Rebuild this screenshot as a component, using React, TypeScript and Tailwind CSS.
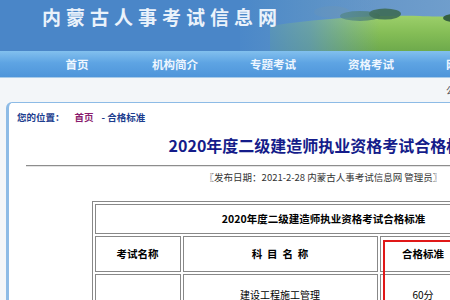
const cjk = '"Noto Sans CJK SC", "Liberation Sans", sans-serif';

const navItems = ['首页', '机构简介', '专题考试', '资格考试', '网上报名'];

function Banner() {
  return (
    <div className="relative h-[51px] w-full overflow-hidden bg-[#4a86c8]">
      <svg className="absolute inset-0" width="644" height="51" viewBox="0 0 644 51">
        <defs>
          <linearGradient id="grassV" x1="0" y1="0" x2="0" y2="1">
            <stop offset="0" stopColor="#9ccf6a" />
            <stop offset="0.5" stopColor="#84bd56" />
            <stop offset="1" stopColor="#6eaa4c" />
          </linearGradient>
          <linearGradient id="fadeL" x1="0" y1="0" x2="1" y2="0">
            <stop offset="0" stopColor="#4b88c9" stopOpacity="1" />
            <stop offset="0.5" stopColor="#5a92c6" stopOpacity="0.7" />
            <stop offset="1" stopColor="#6a9cc6" stopOpacity="0" />
          </linearGradient>
          <linearGradient id="skyR" x1="0" y1="0" x2="1" y2="0">
            <stop offset="0" stopColor="#4a86c8" />
            <stop offset="0.35" stopColor="#6898c9" />
            <stop offset="1" stopColor="#84aed4" />
          </linearGradient>
        </defs>
        <rect x="240" width="404" height="51" fill="url(#skyR)" />
        <ellipse cx="332" cy="12" rx="18" ry="6" fill="#6f94b0" opacity="0.6" />
        <path d="M270 26 C 320 18, 380 15, 420 16 C 440 17, 460 17, 644 16 L 644 51 L 270 51 Z" fill="url(#grassV)" />
        <ellipse cx="360" cy="16" rx="20" ry="5" fill="#4e7e6a" opacity="0.8" />
        <ellipse cx="385" cy="14" rx="16" ry="5.5" fill="#3e6c55" opacity="0.9" />
        <ellipse cx="453" cy="18" rx="10" ry="4" fill="#355f40" />
        <rect x="240" width="140" height="51" fill="url(#fadeL)" />
      </svg>
      <div
        className="relative pl-[42px] pt-[5px] text-[19px] font-bold leading-[24px] tracking-[5px] text-[#eaf2fb]"
        style={{ fontFamily: cjk }}
      >
        内蒙古人事考试信息网
      </div>
    </div>
  );
}

function NavBar() {
  return (
    <div className="flex h-[26px] items-center bg-[linear-gradient(#82c0ee,#5ea4e3_45%,#4e95da)] pl-[28px] shadow-[0_1px_0_#a8cbe9]">
      {navItems.map((item) => (
        <div
          key={item}
          className="w-[98px] text-center text-[11.5px] font-bold leading-[26px] text-[#eef6ff]"
          style={{ fontFamily: cjk }}
        >
          {item}
        </div>
      ))}
    </div>
  );
}

export default function App() {
  const cell = 'border border-[#888] text-center text-black';
  return (
    <div className="h-[300px] w-[450px] overflow-hidden bg-[#f3f6f9]" style={{ fontFamily: cjk }}>
      <div className="w-[644px]">
        <Banner />
        <NavBar />
        <div className="flex h-[25px] items-center pl-[446px] text-[10px] text-[#555]">公告通知</div>

        <div className="ml-[6px] w-[632px] rounded-tl-[6px] border-l-[3px] border-t border-[#8dbbe6] bg-white pt-[6px]">
          <div className="pl-[8px] text-[9.5px] font-bold leading-[16px]">
            <span className="text-[#1c3d8e]">您的位置：</span>
            <span className="ml-[10px] text-[#8a1c6e]">首页</span>
            <span className="ml-[8px] text-[#1c3d8e]">- 合格标准</span>
          </div>

          <div className="mt-[8px] text-center text-[16px] font-bold leading-[24px] text-[#141c8a]">
            2020年度二级建造师执业资格考试合格标准
          </div>

          <div className="mx-[17px] mt-[8px] border-t border-[#8d8d8d] shadow-[0_1px_0_#e4e4e4]" />

          <div className="mt-[3px] text-center text-[9.5px] leading-[16px] text-[#333]">
            〖发布日期：2021-2-28 内蒙古人事考试信息网 管理员〗
          </div>

          <div className="relative mt-[16px] flex justify-center">
            <table className="w-[464px] border-separate border-spacing-[2px] border border-[#888]">
              <tbody>
                <tr className="h-[30px]">
                  <td colSpan={4} className={`${cell} text-[10.5px] font-bold`}>
                    2020年度二级建造师执业资格考试合格标准
                  </td>
                </tr>
                <tr className="h-[36px]">
                  <td className={`${cell} w-[86px] text-[10.5px] font-bold`}>考试名称</td>
                  <td className={`${cell} w-[195px] text-[10.5px] font-bold`}>科&nbsp;&nbsp;目&nbsp;&nbsp;名&nbsp;&nbsp;称</td>
                  <td className={`${cell} w-[87px] text-[10.5px] font-bold`}>合格标准</td>
                  <td className={`${cell} text-[10.5px] font-bold`}>备注</td>
                </tr>
                <tr className="h-[40px]">
                  <td className={cell}></td>
                  <td className={`${cell} text-[10px]`}>建设工程施工管理</td>
                  <td className={`${cell} text-[10px]`}>60分</td>
                  <td className={cell}></td>
                </tr>
              </tbody>
            </table>
            <div className="absolute left-[374px] top-[39px] h-[80px] w-[80px] border-2 border-[#e01818]" />
          </div>
        </div>
      </div>
    </div>
  );
}
